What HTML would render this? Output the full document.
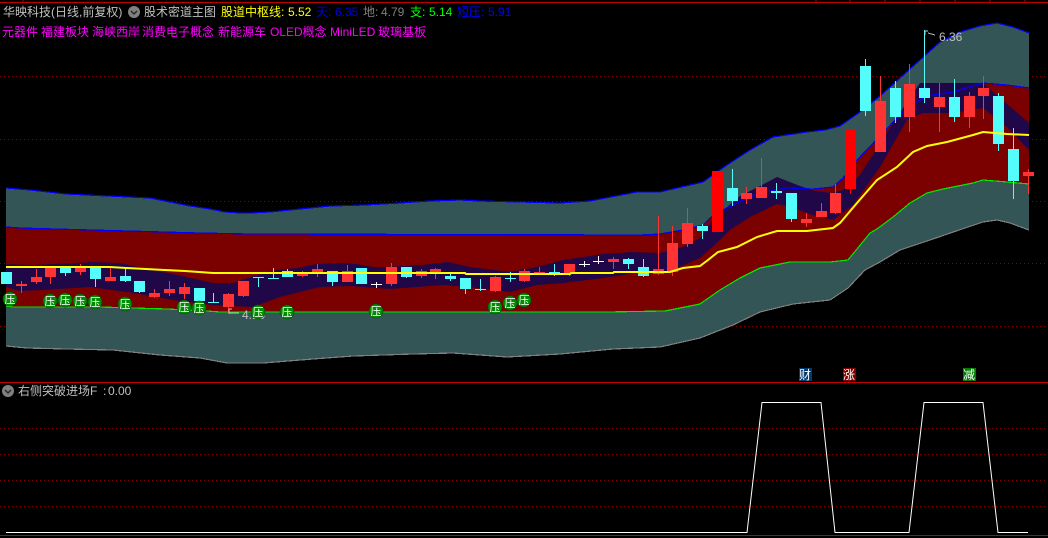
<!DOCTYPE html>
<html><head><meta charset="utf-8"><style>
html,body{margin:0;padding:0;background:#000;width:1048px;height:538px;overflow:hidden}
svg{position:absolute;left:0;top:0}
text{font-family:"Liberation Sans","WenQuanYi Zen Hei","Noto Sans CJK SC",sans-serif;font-size:12px}
.b{fill:#fff;font-size:11px;text-anchor:middle}
.g{fill:#c0c0c0}.m{fill:#f0f}
</style></head><body>
<svg width="1048" height="538" viewBox="0 0 1048 538" xmlns="http://www.w3.org/2000/svg">
<g stroke="#8c0000" stroke-width="1" stroke-dasharray="1 3" shape-rendering="crispEdges">
<path d="M0 76.5H1048M0 139.5H1048M0 201.5H1048M0 263.5H1048M0 326.5H1048M0 428.5H1048M0 454.5H1048M0 480.5H1048M0 506.5H1048"/>
</g>
<path stroke="#c00000" stroke-width="1" fill="none" shape-rendering="crispEdges" d="M0 2.5H1048M0 382.5H1048M0 535.5H1048M23 0V2M816 0V2M850 0V2M885 0V2M920 0V2M955 0V2M990 0V2M1025 0V2"/>
<polygon fill="#335555" points="6,188 30,190 66,194 150,198 190,206 210,209 225,212 240,213 250,213 270,212 290,210 310,208 330,206 365,205 400,203 430,201 460,200 480,201 520,202 560,203 590,201 637,192 660,192 673,189 703,182 727,165 750,150 773,137 807,132 825,130 840,126 860,112 880,96 900,78 920,60 940,42 960,32 980,26 997,23 1013,27 1029,33 1029,230 1010,223 997,220 983,222 962,229 930,240 900,250 880,262 865,270 848,288 830,300 793,304 760,312 733,325 700,338 660,347 613,349 560,354 507,357 453,353 413,354 353,356 313,359 263,363 227,363 200,358 160,355 113,350 67,349 27,348 6,346"/>
<polygon fill="#7b0000" points="6,227 20,228 200,233 250,234 640,235 660,234 683,230 703,225 710,218 723,210 743,200 760,193 787,188 813,189 833,187 843,178 857,160 883,133 907,107 927,96 953,92 983,83 1007,85 1029,88 1029,184 1007,182 983,180 973,183 943,189 927,193 910,203 893,217 877,229 870,233 848,260 830,262 790,262 760,268 740,278 720,290 700,304 665,311 607,312 350,312 220,312 207,311 167,309 133,308 100,307 13,307 6,306"/>
<polygon fill="#200848" points="6,264 33,265 93,262 120,263 143,268 173,274 213,283 233,283 257,275 277,270 297,268 317,264 340,263 357,264 373,267 387,267 403,266 423,265 447,262 470,267 510,272 537,267 563,260 603,254 633,252 660,253 683,247 700,238 712,220 740,196 760,186 777,177 800,186 815,191 833,193 843,190 860,175 893,123 920,83 983,83 1029,123 1029,150 1007,127 983,108 953,113 923,113 907,120 880,167 853,205 833,220 813,215 790,207 777,204 750,217 730,230 720,240 700,258 670,271 643,272 603,278 563,283 537,285 510,292 477,288 443,285 390,289 350,286 320,287 280,297 253,307 213,305 173,300 133,293 90,287 43,290 20,291 6,287"/>
<g fill="none" shape-rendering="crispEdges">
<polyline stroke="#0000ff" stroke-width="1.2" points="6,188 30,190 66,194 150,198 190,206 210,209 225,212 240,213 250,213 270,212 290,210 310,208 330,206 365,205 400,203 430,201 460,200 480,201 520,202 560,203 590,201 637,192 660,192 673,189 703,182 727,165 750,150 773,137 807,132 825,130 840,126 860,112 880,96 900,78 920,60 940,42 960,32 980,26 997,23 1013,27 1029,33"/>
<polyline stroke="#0000ff" stroke-width="1.2" points="6,227 20,228 200,233 250,234 640,235 660,234 683,230 703,225 710,218 723,210 743,200 760,193 787,188 813,189 833,187 843,178 857,160 883,133 907,107 927,96 953,92 983,83 1007,85 1029,88"/>
<polyline stroke="#00e600" stroke-width="1.2" points="6,306 13,307 100,307 133,308 167,309 207,311 220,312 350,312 607,312 665,311 700,304 720,290 740,278 760,268 790,262 830,262 848,260 870,233 877,229 893,217 910,203 927,193 943,189 973,183 983,180 1007,182 1029,184"/>
<polyline stroke="#808080" stroke-width="1.2" points="6,346 27,348 67,349 113,350 160,355 200,358 227,363 263,363 313,359 353,356 413,354 453,353 507,357 560,354 613,349 660,347 700,338 733,325 760,312 793,304 830,300 848,288 865,270 880,262 900,250 930,240 962,229 983,222 997,220 1010,223 1029,230"/>
</g>
<g shape-rendering="crispEdges">
<path fill="#ff3333" d="M16 284h11v2h-11zM21 281h1v12h-1zM31 277h11v5h-11zM36 269h1v15h-1zM45 268h11v9h-11zM50 268h1v16h-1zM75 268h11v4h-11zM80 264h1v11h-1zM105 277h11v4h-11zM110 268h1v13h-1zM149 293h11v4h-11zM154 289h1v9h-1zM164 289h11v4h-11zM169 281h1v15h-1zM179 287h11v7h-11zM184 283h1v16h-1zM223 294h11v13h-11zM228 293h1v20h-1zM238 281h11v15h-11zM243 281h1v16h-1zM297 273h11v3h-11zM302 271h1v6h-1zM312 269h11v4h-11zM317 264h1v13h-1zM342 271h11v11h-11zM347 265h1v17h-1zM386 267h11v17h-11zM391 263h1v23h-1zM416 271h11v5h-11zM421 269h1v9h-1zM430 269h11v4h-11zM435 268h1v11h-1zM490 277h11v14h-11zM495 276h1v16h-1zM519 271h11v10h-11zM524 269h1v13h-1zM534 272h11v1h-11zM539 267h1v8h-1zM564 264h11v9h-11zM569 264h1v12h-1zM608 259h11v3h-11zM613 257h1v12h-1zM653 269h11v5h-11zM658 216h1v59h-1zM667 243h11v29h-11zM672 226h1v50h-1zM682 223h11v21h-11zM687 208h1v39h-1zM741 193h11v6h-11zM746 187h1v17h-1zM756 187h11v11h-11zM761 158h1v40h-1zM801 219h11v4h-11zM806 213h1v14h-1zM816 211h11v6h-11zM821 203h1v14h-1zM830 193h11v20h-11zM835 184h1v30h-1zM875 101h11v51h-11zM880 76h1v76h-1zM904 84h11v33h-11zM909 64h1v68h-1zM934 97h11v10h-11zM939 83h1v49h-1zM964 96h11v21h-11zM969 92h1v36h-1zM978 88h11v8h-11zM983 76h1v43h-1zM1023 172h11v4h-11zM1028 169h1v25h-1z"/>
<path fill="#ff0000" d="M712 171h11v61h-11zM845 129h11v60h-11zM850 189h1v5h-1z"/>
<path fill="#54fcfc" d="M1 272h11v12h-11zM60 268h11v5h-11zM65 273h1v3h-1zM90 268h11v11h-11zM95 279h1v8h-1zM120 276h11v5h-11zM125 269h1v13h-1zM134 281h11v11h-11zM139 292h1v1h-1zM194 288h11v13h-11zM208 302h11v1h-11zM213 293h1v10h-1zM253 277h11v1h-11zM258 277h1v10h-1zM268 278h11v1h-11zM273 268h1v11h-1zM282 271h11v6h-11zM287 269h1v8h-1zM327 271h11v11h-11zM332 282h1v4h-1zM356 268h11v16h-11zM401 267h11v10h-11zM406 277h1v1h-1zM445 276h11v3h-11zM450 274h1v7h-1zM460 278h11v11h-11zM465 289h1v5h-1zM475 289h11v1h-11zM480 279h1v12h-1zM505 278h11v1h-11zM510 272h1v10h-1zM549 272h11v1h-11zM554 264h1v12h-1zM623 259h11v5h-11zM628 258h1v11h-1zM638 267h11v9h-11zM643 259h1v18h-1zM697 226h11v5h-11zM702 224h1v15h-1zM727 188h11v13h-11zM732 169h1v37h-1zM771 191h11v2h-11zM776 183h1v16h-1zM786 193h11v26h-11zM791 219h1v3h-1zM860 66h11v45h-11zM865 59h1v57h-1zM890 88h11v29h-11zM895 81h1v42h-1zM919 88h11v10h-11zM924 30h1v73h-1zM949 97h11v20h-11zM954 79h1v43h-1zM993 96h11v48h-11zM998 93h1v58h-1zM1008 149h11v32h-11zM1013 128h1v71h-1z"/>
<path fill="#fff" d="M371 284h11v1h-11zM376 282h1v6h-1zM579 264h11v1h-11zM584 261h1v6h-1zM593 261h11v1h-11zM598 256h1v8h-1z"/>
</g>
<polyline fill="none" stroke="#ffff00" stroke-width="2" points="6,267 110,267 126,268 155,269.5 185,271 213,273 465,273 466,274 570,274 571,273 613,273 614,272 670,272 683,268 700,266 708,260 718,252 737,247 757,237 777,231 807,231 833,228 840,223 857,203 877,180 897,167 913,152 927,146 947,142 973,135 983,132 1007,134 1029,135"/>
<g stroke="#c0c0c0" fill="none" stroke-width="1" shape-rendering="crispEdges">
<path d="M229 309v5M229 309h3M229 313h10M925 31h3M925 31v4M928 33l7 2"/>
</g>
<text class="g" x="242" y="319">4.19</text>
<text class="g" x="939" y="41">6.36</text>
<g fill="#008c00" stroke="#004d00" stroke-width=".6">
<circle cx="10" cy="299" r="7"/><circle cx="50" cy="301" r="7"/><circle cx="65" cy="300" r="7"/><circle cx="80" cy="301" r="7"/><circle cx="95" cy="302" r="7"/><circle cx="125" cy="304" r="7"/><circle cx="184" cy="307" r="7"/><circle cx="199" cy="308" r="7"/><circle cx="258" cy="312" r="7"/><circle cx="287" cy="312" r="7"/><circle cx="376" cy="311" r="7"/><circle cx="495" cy="307" r="7"/><circle cx="510" cy="303" r="7"/><circle cx="524" cy="300" r="7"/>
</g>
<g class="b">
<text class="b" x="10" y="303">压</text><text class="b" x="50" y="305">压</text><text class="b" x="65" y="304">压</text><text class="b" x="80" y="305">压</text><text class="b" x="95" y="306">压</text><text class="b" x="125" y="308">压</text><text class="b" x="184" y="311">压</text><text class="b" x="199" y="312">压</text><text class="b" x="258" y="316">压</text><text class="b" x="287" y="316">压</text><text class="b" x="376" y="315">压</text><text class="b" x="495" y="311">压</text><text class="b" x="510" y="307">压</text><text class="b" x="524" y="304">压</text>
</g>
<rect x="799" y="368" width="13" height="13" fill="#003a70"/>
<rect x="843" y="368" width="13" height="13" fill="#800000"/>
<rect x="963" y="368" width="13" height="13" fill="#008000"/>
<text x="799" y="379" fill="#fff">财</text>
<text x="843" y="379" fill="#fff">涨</text>
<text x="963" y="379" fill="#fff">减</text>
<polyline fill="none" stroke="#fff" stroke-width="1" points="6,532.5 747,532.5 762,402.5 821,402.5 835,532.5 909,532.5 924,402.5 983,402.5 998,532.5 1028,532.5"/>
<text class="g" x="3" y="16">华映科技(日线,前复权)</text>
<circle cx="134" cy="12" r="6" fill="#808080"/>
<path d="M131 11l3 3 3-3" stroke="#222" stroke-width="1.3" fill="none"/>
<text class="g" x="144" y="16">股术密道主图</text>
<text x="221" y="16" fill="#ff0">股道中枢线:</text><text x="288" y="16" fill="#ff0">5.52</text>
<text x="316" y="16" fill="#0000e0">天:</text><text x="335" y="16" fill="#0000e0">6.35</text>
<text x="363" y="16" fill="#808080">地:</text><text x="381" y="16" fill="#808080">4.79</text>
<text x="410" y="16" fill="#0f0">支:</text><text x="429" y="16" fill="#0f0">5.14</text>
<text x="457" y="16" fill="#0000ff">短压:</text><text x="488" y="16" fill="#0000ff">5.91</text>
<text class="m" x="2" y="36">元器件</text>
<text class="m" x="41" y="36">福建板块</text>
<text class="m" x="92" y="36">海峡西岸</text>
<text class="m" x="142" y="36">消费电子概念</text>
<text class="m" x="218" y="36">新能源车</text>
<text class="m" x="270" y="36">OLED概念</text>
<text class="m" x="330" y="36">MiniLED</text>
<text class="m" x="378" y="36">玻璃基板</text>
<circle cx="8" cy="391" r="6" fill="#808080"/>
<path d="M5 390l3 3 3-3" stroke="#222" stroke-width="1.3" fill="none"/>
<text class="g" x="18" y="395">右侧突破进场F</text>
<text class="g" x="103" y="395">:</text>
<text class="g" x="108" y="395">0.00</text>
</svg>
</body></html>
